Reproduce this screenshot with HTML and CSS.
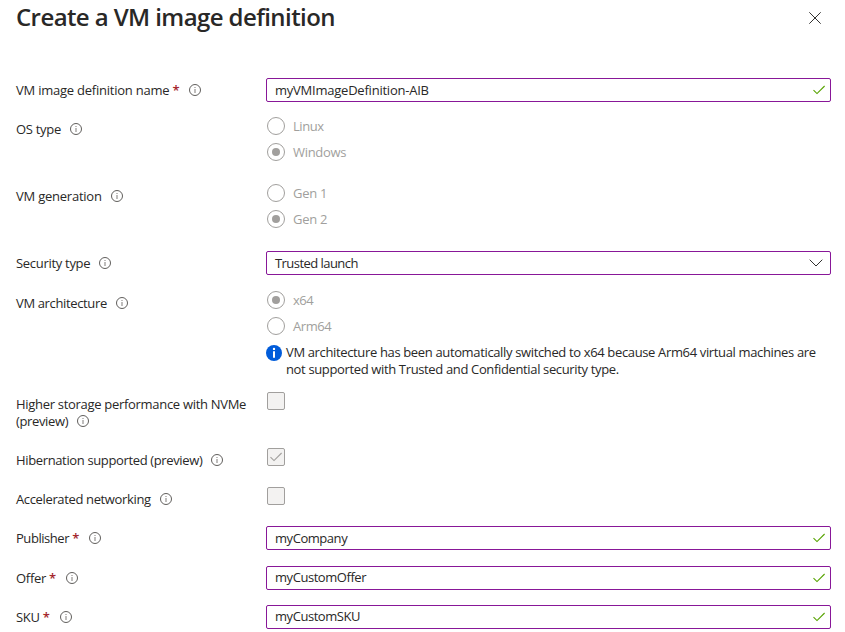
FILE: index.html
```html
<!DOCTYPE html>
<html lang="en">
<head>
<meta charset="utf-8">
<title>Create a VM image definition</title>
<link rel="stylesheet" href="styles.css">
</head>
<body>
<svg class="defs" width="0" height="0">
  <symbol id="info" viewBox="0 0 12 12"><circle cx="6" cy="6" r="5.5" fill="none" stroke="#605e5c" stroke-width="1"/><path d="M6 5v4M6 3v1" stroke="#8a8886" stroke-width="1.1"/></symbol>
  <symbol id="check" viewBox="0 0 12 10"><path d="M.5 5.2 4 8.6 11.6 1" fill="none" stroke="currentColor" stroke-width="1.1"/></symbol>
</svg>
<main class="panel">
  <header class="header">
    <h1>Create a VM image definition</h1>
    <svg class="close" viewBox="0 0 12 12"><path d="M.3.3 11.7 11.7M11.7.3.3 11.7" stroke="#323130" stroke-width="1"/></svg>
  </header>
  <form class="form">
    <div class="row">
      <div class="label"><span class="loose">VM image definition name</span> <b>*</b><svg class="info"><use href="#info"/></svg></div>
      <div class="field"><span class="loose">myVMImageDefinition-AIB</span><svg class="ok"><use href="#check"/></svg></div>
    </div>
    <div class="row radios">
      <div class="label"><span>OS type</span><svg class="info"><use href="#info"/></svg></div>
      <div class="group">
        <div class="radio"><i></i><span class="tight">Linux</span></div>
        <div class="radio on"><i></i><span>Windows</span></div>
      </div>
    </div>
    <div class="row radios">
      <div class="label"><span class="loose">VM generation</span><svg class="info"><use href="#info"/></svg></div>
      <div class="group">
        <div class="radio"><i></i><span>Gen 1</span></div>
        <div class="radio on"><i></i><span>Gen 2</span></div>
      </div>
    </div>
    <div class="row tall">
      <div class="label"><span>Security type</span><svg class="info"><use href="#info"/></svg></div>
      <div class="field"><span class="tighter">Trusted launch</span><svg class="chevron" viewBox="0 0 14 8"><path d="M.7.7 7 7 13.3.7" fill="none" stroke="#323130" stroke-width="1"/></svg></div>
    </div>
    <div class="row arch">
      <div class="label"><span class="snug">VM architecture</span><svg class="info"><use href="#info"/></svg></div>
      <div class="group">
        <div class="radio on"><i></i><span class="tight">x64</span></div>
        <div class="radio"><i></i><span class="tight">Arm64</span></div>
        <div class="note">
          <svg class="note-icon" viewBox="0 0 16 16"><circle cx="8" cy="8" r="8" fill="#015cda"/><circle cx="8" cy="3.9" r="1.2" fill="#fff"/><path d="M8 6.2v6.6" stroke="#fff" stroke-width="2"/></svg>
          <p>VM architecture has been automatically switched to x64 because Arm64 virtual machines are<br>not supported with Trusted and Confidential security type.</p>
        </div>
      </div>
    </div>
    <div class="row double">
      <div class="label"><span>Higher storage performance with NVMe</span><br><span class="snug">(preview)</span><svg class="info"><use href="#info"/></svg></div>
      <div class="box"></div>
    </div>
    <div class="row">
      <div class="label"><span class="snug">Hibernation supported (preview)</span><svg class="info"><use href="#info"/></svg></div>
      <div class="box"><svg><use href="#check"/></svg></div>
    </div>
    <div class="row">
      <div class="label"><span class="snug">Accelerated networking</span><svg class="info"><use href="#info"/></svg></div>
      <div class="box"></div>
    </div>
    <div class="row tall">
      <div class="label"><span class="tight">Publisher</span> <b>*</b><svg class="info"><use href="#info"/></svg></div>
      <div class="field"><span class="tight">myCompany</span><svg class="ok"><use href="#check"/></svg></div>
    </div>
    <div class="row">
      <div class="label"><span>Offer</span> <b>*</b><svg class="info"><use href="#info"/></svg></div>
      <div class="field raised"><span class="tight">myCustomOffer</span><svg class="ok"><use href="#check"/></svg></div>
    </div>
    <div class="row last">
      <div class="label"><span>SKU</span> <b>*</b><svg class="info"><use href="#info"/></svg></div>
      <div class="field raised"><span class="tight">myCustomSKU</span><svg class="ok"><use href="#check"/></svg></div>
    </div>
  </form>
</main>
</body>
</html>
```
FILE: styles.css
```css
* { box-sizing: border-box; }
body {
  margin: 0;
  background: #fff;
  color: #292827;
  font: 13px/17px "Open Sans", "Noto Sans", sans-serif;
  letter-spacing: -0.3px;
  overflow: hidden;
}
.loose { letter-spacing: -0.23px; }
.snug { letter-spacing: -0.36px; }
.tight { letter-spacing: -0.45px; }
.tighter { letter-spacing: -0.55px; }
.defs { position: absolute; }
.panel { width: 845px; height: 632px; padding: 0 14px 0 16px; }
.header { display: flex; justify-content: space-between; height: 78px; }
h1 {
  margin: 1px 0 0;
  font-size: 24px;
  line-height: 32px;
  font-weight: 600;
  letter-spacing: -0.59px;
}
.close { width: 12px; height: 12px; margin: 12px 10px 0 0; }
.row { display: grid; grid-template-columns: 250px 565px; align-items: start; height: 39px; }
.radios { height: 67px; }
.tall { height: 40px; }
.arch { height: 101px; }
.double { height: 56px; }
.last { height: 27px; }
.label { padding-top: 4px; white-space: nowrap; }
.label b { color: #a4262c; font-weight: 600; }
.info { width: 12px; height: 12px; margin-left: 9px; vertical-align: -1px; }
.label b + .info { margin-left: 10px; }
.field {
  display: flex;
  align-items: center;
  justify-content: space-between;
  height: 24px;
  padding: 0 5px 0 8px;
  border: 1px solid #881798;
  border-radius: 2px;
}
.raised span { margin-top: -2px; }
.ok { width: 12px; height: 10px; color: #57a300; }
.chevron { width: 14px; height: 8px; margin-right: 2px; }
.group { display: flex; flex-direction: column; gap: 8px; }
.radio { display: flex; align-items: center; gap: 8px; height: 18px; margin-left: 1px; color: #a19f9d; }
.radio i {
  display: grid;
  place-items: center;
  width: 18px;
  height: 18px;
  border: 1px solid #a19f9d;
  border-radius: 50%;
}
.radio.on i::before { content: ""; width: 8px; height: 8px; border-radius: 50%; background: #a19f9d; }
.note { display: flex; gap: 4px; white-space: nowrap; letter-spacing: -0.355px; }
.note-icon { flex: none; width: 16px; height: 16px; margin-top: 2px; }
.note p { margin: 1px 0 0; }
.box {
  display: grid;
  place-items: center;
  width: 18px;
  height: 18px;
  margin-left: 1px;
  border: 1px solid #a19f9d;
  border-radius: 2px;
  background: #f3f2f1;
  color: #a19f9d;
}
.box svg { width: 12px; height: 10px; }
```
